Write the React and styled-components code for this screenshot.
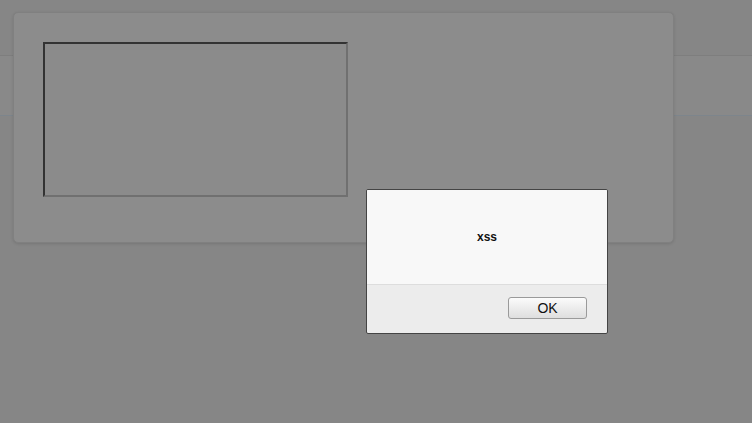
import React from "react";
import styled, { createGlobalStyle } from "styled-components";

const GlobalStyle = createGlobalStyle`
  html, body {
    margin: 0;
    padding: 0;
    background: #868686;
    font-family: "Liberation Sans", Arial, sans-serif;
  }
`;

const Page = styled.div`
  position: relative;
  width: 752px;
  height: 423px;
  overflow: hidden;
  background: #868686;
`;

const HeaderBand = styled.div`
  margin-top: 55px;
  height: 59px;
  background: #898989;
  border-top: 1px solid #7e7e7e;
  border-bottom: 1px solid #7d858c;
`;

const Panel = styled.div`
  position: absolute;
  left: 13px;
  top: 12px;
  width: 661px;
  height: 231px;
  box-sizing: border-box;
  padding: 29px;
  background: #8c8c8c;
  border: 1px solid #808080;
  border-radius: 5px;
  box-shadow: 0 1px 3px rgba(0, 0, 0, 0.12);
`;

const TextArea = styled.textarea`
  display: block;
  width: 305px;
  height: 155px;
  box-sizing: border-box;
  margin: 0;
  padding: 2px;
  resize: none;
  background: #8b8b8b;
  border-style: solid;
  border-width: 2px;
  border-color: #333 #707070 #707070 #333;
  outline: none;
`;

const Dialog = styled.div`
  position: absolute;
  left: 366px;
  top: 189px;
  width: 242px;
  height: 145px;
  box-sizing: border-box;
  display: flex;
  flex-direction: column;
  border: 1px solid #444;
  border-radius: 2px;
  overflow: hidden;
  background: #ececec;
`;

const Message = styled.div`
  height: 94px;
  display: flex;
  align-items: center;
  justify-content: center;
  background: #f8f8f8;
  border-bottom: 1px solid #dddddd;
  font-size: 12px;
  font-weight: bold;
  color: #111;
`;

const Footer = styled.div`
  flex: 1;
  display: flex;
  justify-content: flex-end;
  align-items: flex-start;
  padding: 12px 20px 0 0;
`;

const OkButton = styled.button`
  width: 79px;
  height: 22px;
  padding: 0;
  border: 1px solid #9a9a9a;
  border-radius: 3px;
  background: linear-gradient(#fbfbfb, #dedede);
  font-family: "Liberation Sans", Arial, sans-serif;
  font-size: 14px;
  color: #111;
`;

export default function App() {
  return (
    <Page>
      <GlobalStyle />
      <HeaderBand />
      <Panel>
        <TextArea />
      </Panel>
      <Dialog>
        <Message>xss</Message>
        <Footer>
          <OkButton>OK</OkButton>
        </Footer>
      </Dialog>
    </Page>
  );
}
